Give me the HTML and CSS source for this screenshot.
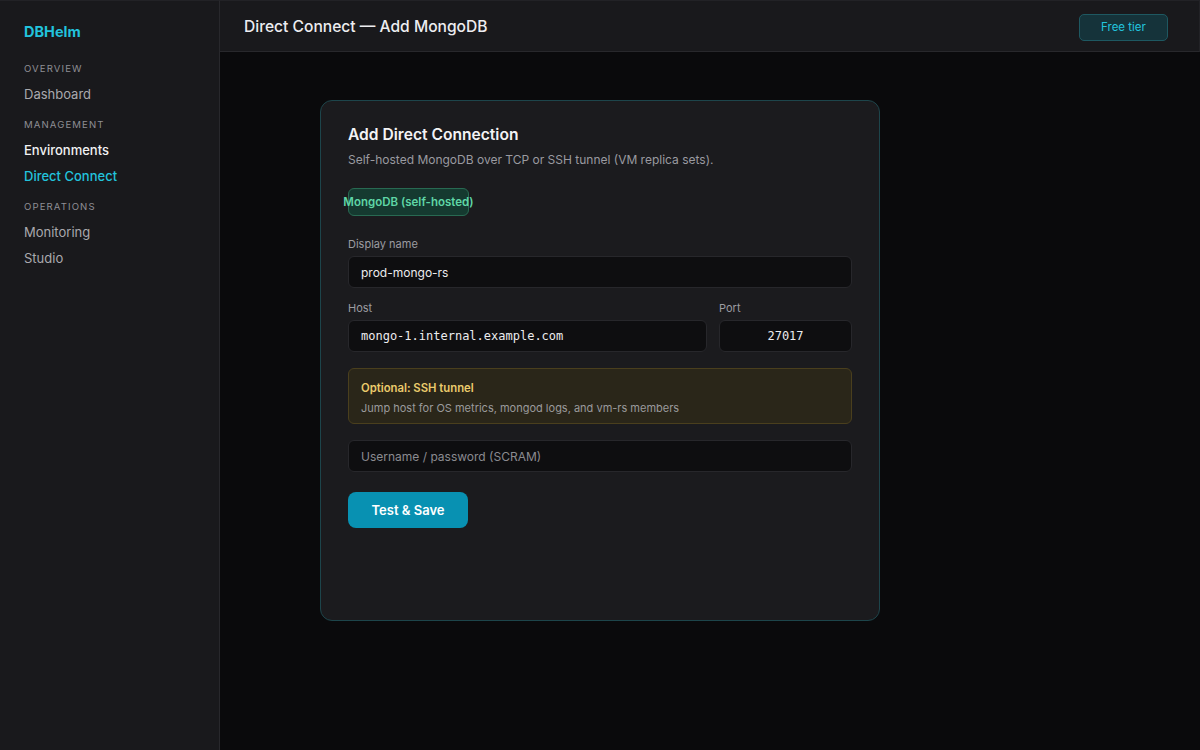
FILE: index.html
```html
<!DOCTYPE html>
<html lang="en">
<head>
<meta charset="UTF-8">
<title>DBHelm — Direct Connect</title>
<link rel="stylesheet" href="styles.css">
</head>
<body>
<div class="app">
  <aside class="sidebar">
    <div class="brand">DBHelm</div>
    <div class="nav-section">Overview</div>
    <a class="nav-item">Dashboard</a>
    <div class="nav-section">Management</div>
    <a class="nav-item strong">Environments</a>
    <a class="nav-item active">Direct Connect</a>
    <div class="nav-section">Operations</div>
    <a class="nav-item">Monitoring</a>
    <a class="nav-item">Studio</a>
  </aside>

  <div class="main">
    <header class="topbar">
      <h1>Direct Connect — Add MongoDB</h1>
      <button class="tier-btn">Free tier</button>
    </header>

    <div class="content">
      <div class="card">
        <h2>Add Direct Connection</h2>
        <p class="sub">Self-hosted MongoDB over TCP or SSH tunnel (VM replica sets).</p>
        <div class="chip">MongoDB (self-hosted)</div>

        <div class="field">
          <label>Display name</label>
          <div class="input">prod-mongo-rs</div>
        </div>

        <div class="row">
          <div class="field grow">
            <label>Host</label>
            <div class="input mono">mongo-1.internal.example.com</div>
          </div>
          <div class="field port">
            <label>Port</label>
            <div class="input mono center">27017</div>
          </div>
        </div>

        <div class="notice">
          <div class="notice-title">Optional: SSH tunnel</div>
          <div class="notice-text">Jump host for OS metrics, mongod logs, and vm-rs members</div>
        </div>

        <div class="input placeholder">Username / password (SCRAM)</div>

        <button class="save-btn">Test &amp; Save</button>
      </div>
    </div>
  </div>
</div>
</body>
</html>
```

FILE: styles.css
```css
:root{
  --bg:#0a0a0c;
  --panel:#19191c;
  --card:#1b1b1e;
  --line:#28282c;
  --cyan:#22c3dd;
  --muted:#8e8e94;
}
*{box-sizing:border-box;}
body{margin:0;background:var(--bg);color:#e8e8ea;font-family:Inter,"Noto Sans",Arial,sans-serif;}
.app{display:flex;height:750px;}

.sidebar{width:220px;flex:none;background:var(--panel);border-right:1px solid var(--line);border-top:1px solid #222226;padding:20px 24px;display:flex;flex-direction:column;}
.brand{font-size:14.5px;font-weight:700;color:var(--cyan);line-height:22px;margin-bottom:19px;}
.nav-section{font-size:9.6px;letter-spacing:1.1px;text-transform:uppercase;color:var(--muted);line-height:14px;margin-bottom:5px;}
.nav-item{font-size:13px;line-height:20px;padding:3px 0;color:#a9a9ae;}
.nav-item + .nav-section{margin-top:11px;}
.nav-item.strong{color:#f1f1f3;font-weight:500;}
.nav-item.active{color:var(--cyan);font-weight:500;}

.main{flex:1;display:flex;flex-direction:column;}
.topbar{height:52px;flex:none;background:var(--panel);border-bottom:1px solid var(--line);border-top:1px solid #222226;border-right:1px solid #222226;display:flex;align-items:center;justify-content:space-between;padding:1px 31px 0 24px;}
.topbar h1{margin:0;font-size:15.6px;font-weight:500;color:#ededf0;}
.tier-btn{width:89px;height:27px;margin-top:1px;background:#15333a;border:1px solid #1e5861;border-radius:5px;color:var(--cyan);font-family:inherit;font-size:11.5px;padding:0;}

.content{flex:1;padding:48px 100px;}
.card{width:560px;height:521px;background:var(--card);border:1px solid #1d454b;border-radius:12px;padding:23px 27px;display:flex;flex-direction:column;align-items:flex-start;}
.card h2{margin:0;font-size:15.6px;font-weight:600;line-height:22px;color:#f3f3f5;}
.sub{margin:5px 0 0;font-size:12px;line-height:18px;color:#9a9aa0;}
.chip{margin-top:19px;width:121px;height:28px;display:flex;align-items:center;justify-content:center;white-space:nowrap;background:#153a30;border:1px solid #286a52;border-radius:6px;color:#5fd6a6;font-size:11.5px;font-weight:600;}

.field{display:flex;flex-direction:column;width:100%;}
.card > .field{margin-top:20px;}
.field label{font-size:11px;line-height:16px;color:#9c9ca1;margin-bottom:4px;}
.row{display:flex;gap:12px;width:100%;margin-top:12px;}
.grow{flex:1;}
.port{width:133px;flex:none;}

.input{width:100%;height:32px;background:#0e0e10;border:1px solid #27272b;border-radius:6px;padding:0 12px;display:flex;align-items:center;font-size:12px;color:#ececee;}
.mono{font-family:"DejaVu Sans Mono","Liberation Mono",monospace;font-size:12px;}
.center{justify-content:center;}
.placeholder{color:#8b8b90;margin-top:16px;}

.notice{width:100%;margin-top:16px;height:56px;background:#2a2619;border:1px solid #4a3f1d;border-radius:6px;padding:11px 12px;}
.notice-title{font-size:11.3px;font-weight:600;color:#ebcb6c;line-height:16px;}
.notice-text{font-size:11px;color:#9a9a9c;line-height:16px;margin-top:4px;}

.save-btn{margin-top:20px;width:120px;height:36px;border:none;border-radius:8px;background:#0891b2;color:#fff;font-family:inherit;font-size:13px;font-weight:600;}
```
